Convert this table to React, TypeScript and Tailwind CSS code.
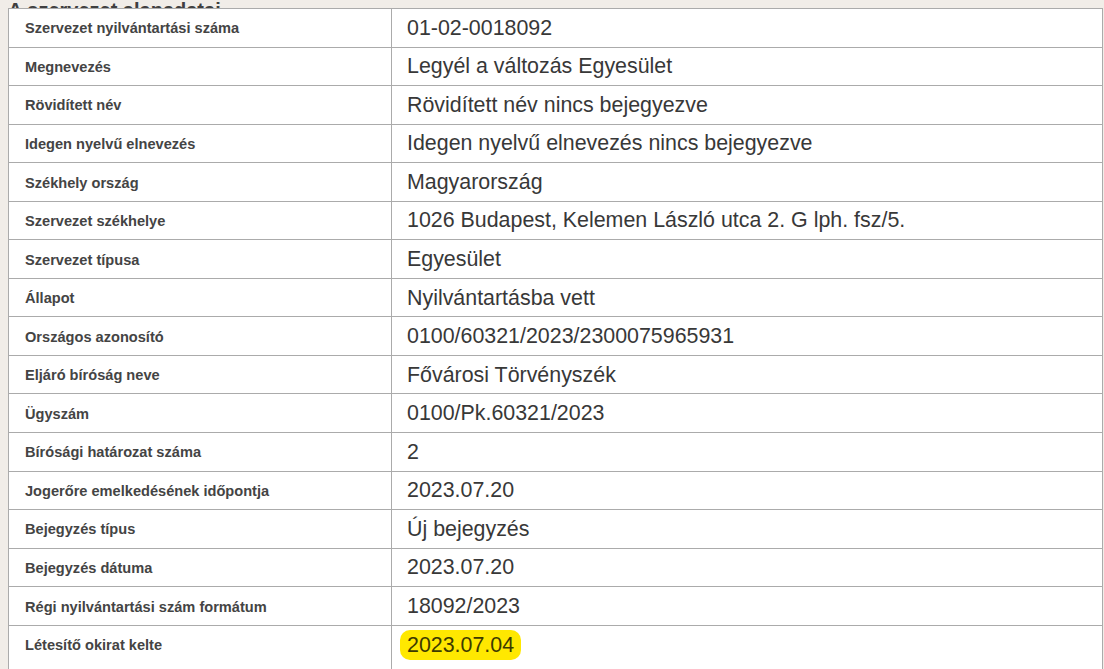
const rows: [string, string][] = [
  ["Szervezet nyilvántartási száma", "01-02-0018092"],
  ["Megnevezés", "Legyél a változás Egyesület"],
  ["Rövidített név", "Rövidített név nincs bejegyezve"],
  ["Idegen nyelvű elnevezés", "Idegen nyelvű elnevezés nincs bejegyezve"],
  ["Székhely ország", "Magyarország"],
  ["Szervezet székhelye", "1026 Budapest, Kelemen László utca 2. G lph. fsz/5."],
  ["Szervezet típusa", "Egyesület"],
  ["Állapot", "Nyilvántartásba vett"],
  ["Országos azonosító", "0100/60321/2023/2300075965931"],
  ["Eljáró bíróság neve", "Fővárosi Törvényszék"],
  ["Ügyszám", "0100/Pk.60321/2023"],
  ["Bírósági határozat száma", "2"],
  ["Jogerőre emelkedésének időpontja", "2023.07.20"],
  ["Bejegyzés típus", "Új bejegyzés"],
  ["Bejegyzés dátuma", "2023.07.20"],
  ["Régi nyilvántartási szám formátum", "18092/2023"],
  ["Létesítő okirat kelte", "2023.07.04"],
];

export default function App() {
  return (
    <div className="h-[669px] overflow-hidden bg-[#f1ede8] pl-2 font-['Liberation_Sans',Arial,sans-serif]">
      {/* Heading, scrolled mostly out of view */}
      <div className="flex h-2 items-end overflow-hidden">
        <h2 className="mb-[-12px] text-[20px] font-bold leading-none text-[#3f3f3f]">A szervezet alapadatai</h2>
      </div>

      <table className="w-[1095px] border-collapse bg-white">
        <tbody>
          {rows.map(([label, value], i) => {
            const last = i === rows.length - 1;
            return (
              <tr key={label} className={last ? "h-[52px]" : "h-[38.56px]"}>
                <td
                  className={`w-[383px] border border-[#ababab] pl-4 pt-[3px] text-[14.6px] font-bold text-[#444] ${last ? "pb-[13px]" : ""}`}
                >
                  {label}
                </td>
                <td
                  className={`border border-[#ababab] pl-[15px] text-[21.4px] text-[#383838] ${last ? "pb-[13px]" : ""}`}
                >
                  {last ? (
                    <span className="-ml-[7px] rounded-[10px] bg-[#ffe800] px-[7px] py-[3px] text-[#3d3a00]">{value}</span>
                  ) : (
                    value
                  )}
                </td>
              </tr>
            );
          })}
        </tbody>
      </table>
    </div>
  );
}
